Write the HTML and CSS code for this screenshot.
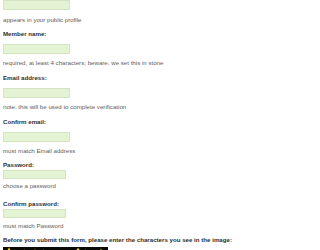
FILE: index.html
```html
<!DOCTYPE html>
<html>
<head>
<meta charset="utf-8">
<link rel="stylesheet" href="styles.css">
</head>
<body>
<form class="form">
  <div class="field first">
    <input class="box" type="text">
    <div class="hint">appears in your public profile</div>
  </div>
  <div class="field">
    <label class="label">Member name:</label>
    <input class="box" type="text">
    <div class="hint">required, at least 4 characters; beware, we set this in stone</div>
  </div>
  <div class="field">
    <label class="label">Email address:</label>
    <input class="box" type="text">
    <div class="hint">note: this will be used to complete verification</div>
  </div>
  <div class="field">
    <label class="label">Confirm email:</label>
    <input class="box" type="text">
    <div class="hint">must match Email address</div>
  </div>
  <div class="field pw">
    <label class="label">Password:</label>
    <input class="box" type="password">
    <div class="hint">choose a password</div>
  </div>
  <div class="field pw">
    <label class="label">Confirm password:</label>
    <input class="box" type="password">
    <div class="hint">must match Password</div>
  </div>
  <div class="field captcha">
    <div class="label">Before you submit this form, please enter the characters you see in the image:</div>
    <div class="captcha-img">
      <svg width="105" height="12" viewBox="0 0 105 12">
        <rect width="105" height="12" fill="#0b0b05"/>
        <path d="M2 9 L6 2 L9 8 L12 3 M15 4 L18 9 L22 3 M26 8 C30 2 34 2 36 7 M40 3 L44 9 L48 4 L52 9 M56 7 C60 1 64 10 68 4 M71 8 L75 2 L79 8 L83 3 M86 6 C90 1 94 10 98 3 L102 8" stroke="#e8e020" stroke-width="1.4" fill="none"/>
        <path d="M0 5 L105 4 M0 10 L105 9" stroke="#8a8a1a" stroke-width="0.6"/>
      </svg>
    </div>
  </div>
</form>
</body>
</html>
```
FILE: styles.css
```css
html, body {
  margin: 0;
  padding: 0;
  background: #ffffff;
}
body {
  font-family: "Liberation Sans", Arial, sans-serif;
  overflow: hidden;
}
.form {
  display: flex;
  flex-direction: column;
  padding-left: 3px;
}
.field {
  display: flex;
  flex-direction: column;
  align-items: flex-start;
  margin-top: 7px;
}
.field.first {
  margin-top: 0;
}
.label {
  display: block;
  font-size: 6.15px;
  line-height: 8px;
  font-weight: bold;
  color: #2e2e2e;
  white-space: nowrap;
}
.box {
  display: block;
  box-sizing: border-box;
  width: 67px;
  height: 10px;
  margin: 6px 0 0 0;
  padding: 0;
  background: #e4f3d4;
  border: 1px solid #d3e6c1;
  outline: none;
}
.field.first .box {
  margin-top: 0;
}
.field.first .hint {
  margin-top: 6px;
}
.field.first + .field {
  margin-top: 6px;
}
.hint {
  font-size: 6.15px;
  line-height: 8px;
  color: #5e5e5e;
  margin-top: 5px;
  white-space: nowrap;
}
.field.pw {
  margin-top: 6px;
}
.field.pw + .field.pw {
  margin-top: 10px;
}
.field.pw .box {
  width: 63px;
  height: 9px;
  margin-top: 1px;
}
.field.pw .hint {
  margin-top: 3px;
}
.field.pw + .field.pw .hint {
  margin-top: 4px;
}
.field.captcha {
  margin-top: 6px;
}
.captcha-img {
  margin-top: 3px;
  width: 105px;
  height: 12px;
  line-height: 0;
}
```
